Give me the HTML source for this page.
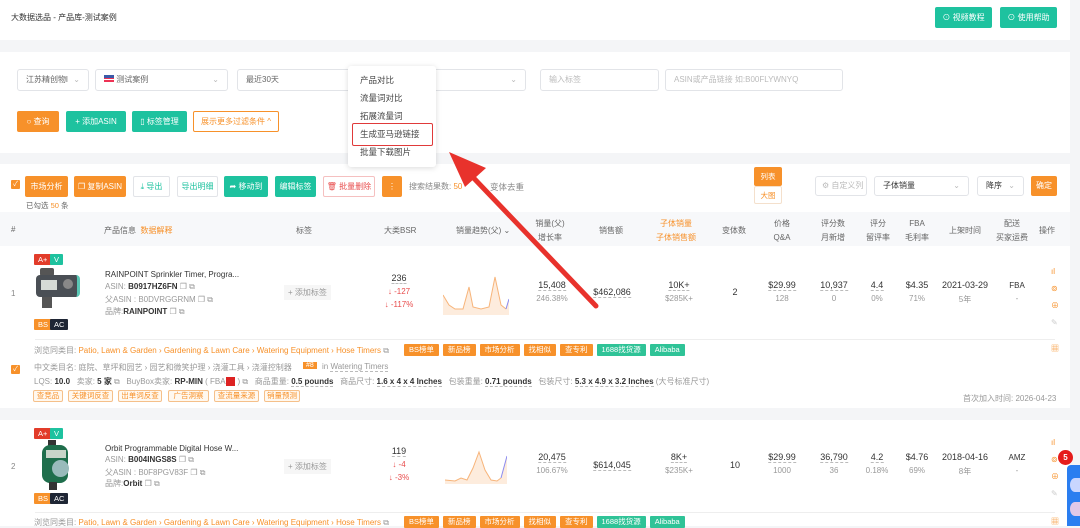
<!DOCTYPE html>
<html><head><meta charset="utf-8"><style>
*{box-sizing:border-box;margin:0;padding:0}
body{width:1080px;height:526px;overflow:hidden;background:#f4f5f7;font-family:"Liberation Sans","Noto Sans CJK SC",sans-serif;font-size:8px;color:#333;position:relative}
.a{position:absolute;white-space:nowrap}
.card{position:absolute;background:#fff}
.btn{position:absolute;height:21px;line-height:21px;text-align:center;color:#fff;font-size:8px;border-radius:2px;white-space:nowrap}
.g{background:#1ec29f}.o{background:#f7912a}
.sel{position:absolute;height:22px;border:1px solid #e2e4e8;border-radius:3px;background:#fff;color:#666;line-height:20px;padding-left:8px;white-space:nowrap}
.sel .c{position:absolute;right:8px;top:0;color:#bbb}
.ph{color:#bbb}
.hd{color:#666;text-align:center;transform:translateX(-50%)}
.tag{position:absolute;height:11px;line-height:11px;font-size:7.5px;color:#fff;padding:0 4px;border-radius:1px}
.otag{position:absolute;height:12px;line-height:10px;font-size:7.5px;color:#f7912a;border:1px solid #f5c08a;background:#fff8ef;text-align:center;border-radius:2px}
.u{border-bottom:1px dashed #bbb}
.gr{color:#999}
.red{color:#e84c4c}
.ctr{text-align:center;transform:translateX(-50%)}
.tl{position:absolute;display:flex;gap:4px}
.tl span{background:#f7912a;color:#fff;height:12px;line-height:12px;font-size:7.5px;padding:0 5px;border-radius:1px}
.tl span.gg{background:#2fc397}
</style></head><body>

<!-- top bar -->
<div class="card" style="left:0;top:0;width:1070px;height:40px"></div>
<div class="a" style="left:11px;top:12px;font-size:8px;color:#333">大数据选品 - 产品库-测试案例</div>
<div class="btn g" style="left:935px;top:7px;width:57px">⊙ 视频教程</div>
<div class="btn g" style="left:1000px;top:7px;width:57px">⊙ 使用帮助</div>

<!-- filter card -->
<div class="card" style="left:0;top:52px;width:1070px;height:101px"></div>
<div class="sel" style="left:17px;top:69px;width:72px">江苏精创物l <span class="c">⌄</span></div>
<div class="sel" style="left:95px;top:69px;width:133px"><span style="display:inline-block;width:10px;height:7px;background:linear-gradient(#3c5aa8 0 45%,#e35 45% 60%,#fff 60% 75%,#e35 75%)"></span> 测试案例 <span class="c">⌄</span></div>
<div class="sel" style="left:237px;top:69px;width:200px">最近30天</div>
<div class="sel" style="left:420px;top:69px;width:106px"><span class="c">⌄</span></div>
<div class="sel ph" style="left:540px;top:69px;width:119px">输入标签</div>
<div class="sel ph" style="left:665px;top:69px;width:178px">ASIN或产品链接 如:B00FLYWNYQ</div>
<div class="btn o" style="left:17px;top:111px;width:42px">○ 查询</div>
<div class="btn g" style="left:66px;top:111px;width:60px">+ 添加ASIN</div>
<div class="btn g" style="left:132px;top:111px;width:55px">▯ 标签管理</div>
<div class="btn" style="left:193px;top:111px;width:86px;border:1px solid #f7912a;color:#f7912a;background:#fff;line-height:19px">展示更多过滤条件 ^</div>

<!-- table card -->
<div class="card" style="left:0;top:164px;width:1070px;height:244px"></div>
<div class="a" style="left:11px;top:180px;width:9px;height:9px;background:#f7912a;border-radius:1px;color:#fff;font-size:7px;line-height:9px;text-align:center">✓</div>
<div class="btn o" style="left:25px;top:176px;width:43px">市场分析</div>
<div class="btn o" style="left:74px;top:176px;width:52px">❐ 复制ASIN</div>
<div class="btn" style="left:133px;top:176px;width:37px;border:1px solid #e2e4e8;color:#1ec29f;background:#fff;line-height:19px">⤓ 导出</div>
<div class="btn" style="left:177px;top:176px;width:41px;border:1px solid #e2e4e8;color:#1ec29f;background:#fff;line-height:19px">导出明细</div>
<div class="btn g" style="left:224px;top:176px;width:44px">➦ 移动到</div>
<div class="btn g" style="left:275px;top:176px;width:41px">编辑标签</div>
<div class="btn" style="left:323px;top:176px;width:52px;border:1px solid #f5c0c0;color:#e84c4c;background:#fff;line-height:19px">🗑 批量删除</div>
<div class="btn o" style="left:382px;top:176px;width:20px">⋮</div>
<div class="a" style="left:409px;top:181px;color:#888">搜索结果数: <span style="color:#f7912a">50</span></div>
<div class="a" style="left:490px;top:181px;color:#888;font-size:8.5px">变体去重</div>
<div class="a" style="left:26px;top:200px;color:#666;font-size:7.5px">已勾选 <span style="color:#f7912a">50</span> 条</div>
<div class="btn o" style="left:754px;top:167px;width:28px;height:19px;line-height:19px;font-size:7.5px">列表</div>
<div class="btn" style="left:754px;top:186px;width:28px;height:18px;line-height:18px;font-size:7.5px;background:#fff;color:#f7912a;border:1px solid #f4e0cc">大图</div>
<div class="sel ph" style="left:815px;top:176px;width:52px;height:20px;line-height:18px;padding-left:6px">⚙ 自定义列</div>
<div class="sel" style="left:874px;top:176px;width:95px;height:20px;line-height:18px;color:#333">子体销量<span class="c">⌄</span></div>
<div class="sel" style="left:977px;top:176px;width:47px;height:20px;line-height:18px;color:#333">降序<span class="c">⌄</span></div>
<div class="btn o" style="left:1031px;top:176px;width:26px;height:20px;line-height:20px">确定</div>

<!-- header -->
<div class="a" style="left:0;top:212px;width:1070px;height:34px;background:#f7f8fa"></div>
<div class="a" style="left:11px;top:225px;color:#666">#</div>
<div class="a" style="left:104px;top:225px;color:#666">产品信息 &nbsp;<span style="color:#f7912a">数据解释</span></div>
<div class="a" style="left:296px;top:225px;color:#666">标签</div>
<div class="a" style="left:384px;top:225px;color:#666">大类BSR</div>
<div class="a" style="left:456px;top:225px;color:#666">销量趋势(父) ⌄</div>
<div class="a hd" style="left:550px;top:217px;line-height:14px">销量(父)<br>增长率</div>
<div class="a hd" style="left:611px;top:225px">销售额</div>
<div class="a hd" style="left:676px;top:217px;line-height:14px;color:#f7912a">子体销量<br>子体销售额</div>
<div class="a hd" style="left:734px;top:225px">变体数</div>
<div class="a hd" style="left:782px;top:217px;line-height:14px">价格<br>Q&amp;A</div>
<div class="a hd" style="left:833px;top:217px;line-height:14px">评分数<br>月新增</div>
<div class="a hd" style="left:878px;top:217px;line-height:14px">评分<br>留评率</div>
<div class="a hd" style="left:917px;top:217px;line-height:14px">FBA<br>毛利率</div>
<div class="a hd" style="left:965px;top:225px">上架时间</div>
<div class="a hd" style="left:1012px;top:217px;line-height:14px">配送<br>买家运费</div>
<div class="a hd" style="left:1047px;top:225px">操作</div>

<!-- row 1 -->
<div class="a" style="left:11px;top:289px;color:#888">1</div>
<div class="tag" style="left:34px;top:254px;background:#e23c2a">A+</div>
<div class="tag" style="left:50px;top:254px;background:#1ec29f">V</div>
<div class="a" style="left:36px;top:268px;width:44px;height:40px">
 <div class="a" style="left:4px;top:0;width:14px;height:8px;background:#555;border-radius:2px"></div>
 <div class="a" style="left:0;top:7px;width:44px;height:22px;background:#4a4f55;border-radius:4px;border-right:3px solid #5ac7b5"></div>
 <div class="a" style="left:5px;top:12px;width:16px;height:10px;background:#d5dad5"></div>
 <div class="a" style="left:27px;top:11px;width:10px;height:10px;background:#888;border-radius:50%"></div>
 <div class="a" style="left:6px;top:29px;width:10px;height:11px;background:#555"></div>
</div>
<div class="tag" style="left:34px;top:319px;background:#f7912a">BS</div>
<div class="tag" style="left:50px;top:319px;background:#1f2635">AC</div>
<div class="a" style="left:105px;top:270px;color:#333">RAINPOINT Sprinkler Timer, Progra...</div>
<div class="a gr" style="left:105px;top:282px">ASIN: <b style="color:#333">B0917HZ6FN</b> ❐ ⧉</div>
<div class="a gr" style="left:105px;top:294px">父ASIN : B0DVRGGRNM ❐ ⧉</div>
<div class="a gr" style="left:105px;top:306px">品牌:<b style="color:#333">RAINPOINT</b> ❐ ⧉</div>
<div class="a gr" style="left:284px;top:285px;background:#f6f6f6;padding:2px 4px">+ 添加标签</div>
<div class="a ctr u" style="left:399px;top:273px;font-size:9px">236</div>
<div class="a ctr red" style="left:399px;top:287px">↓ -127</div>
<div class="a ctr red" style="left:399px;top:300px">↓ -117%</div>
<svg class="a" style="left:443px;top:275px" width="66" height="40"><path d="M0 20 L6 30 L12 34 L20 34 L26 12 L30 32 L38 34 L46 32 L52 2 L58 30 L63 34 L66 24 L66 40 L0 40Z" fill="#fde7d4" opacity=".8"/><path d="M0 20 L6 30 L12 34 L20 34 L26 12 L30 32 L38 34 L46 32 L52 2 L58 30 L63 34" fill="none" stroke="#f7b47a" stroke-width="1"/><path d="M63 34 L66 24" stroke="#8a8af0"/></svg>
<div class="a ctr u" style="left:552px;top:280px;font-size:9px">15,408</div>
<div class="a ctr gr" style="left:552px;top:294px">246.38%</div>
<div class="a ctr u" style="left:612px;top:287px;font-size:9px">$462,086</div>
<div class="a ctr u" style="left:679px;top:280px;font-size:9px">10K+</div>
<div class="a ctr gr" style="left:679px;top:294px">$285K+</div>
<div class="a ctr" style="left:735px;top:287px;font-size:9px">2</div>
<div class="a ctr u" style="left:782px;top:280px;font-size:9px">$29.99</div>
<div class="a ctr gr" style="left:782px;top:294px">128</div>
<div class="a ctr u" style="left:834px;top:280px;font-size:9px">10,937</div>
<div class="a ctr gr" style="left:834px;top:294px">0</div>
<div class="a ctr u" style="left:877px;top:280px;font-size:9px">4.4</div>
<div class="a ctr gr" style="left:877px;top:294px">0%</div>
<div class="a ctr" style="left:917px;top:280px;font-size:9px">$4.35</div>
<div class="a ctr gr" style="left:917px;top:294px">71%</div>
<div class="a ctr" style="left:965px;top:280px;font-size:9px">2021-03-29</div>
<div class="a ctr gr" style="left:965px;top:294px">5年</div>
<div class="a ctr" style="left:1017px;top:281px">FBA</div>
<div class="a ctr gr" style="left:1017px;top:294px">-</div>
<div class="a" style="left:1051px;top:263px;color:#f7912a;font-size:8px;line-height:17px">ıl<br>⊚<br>⊕<br><span style="color:#ccc">✎</span></div>
<div class="a" style="left:35px;top:339px;width:1020px;height:1px;background:#eee"></div>
<div class="a gr" style="left:34px;top:345px">浏览同类目: <span style="color:#f7912a">Patio, Lawn &amp; Garden › Gardening &amp; Lawn Care › Watering Equipment › Hose Timers</span> ⧉</div>
<div class="tl" style="left:404px;top:344px"><span>BS榜单</span><span>新品榜</span><span>市场分析</span><span>找相似</span><span>查专利</span><span class="gg">1688找货源</span><span class="gg">Alibaba</span></div>
<div class="a" style="left:1051px;top:343px;color:#f7912a">▦</div>
<div class="a" style="left:11px;top:365px;width:9px;height:9px;background:#f7912a;border-radius:1px;color:#fff;font-size:7px;line-height:9px;text-align:center">✓</div>
<div class="a gr" style="left:34px;top:362px">中文类目名: 庭院、草坪和园艺 › 园艺和微笑护理 › 浇灌工具 › 浇灌控制器</div>
<div class="a" style="left:303px;top:362px;background:#f7912a;color:#fff;padding:0 3px;font-size:7px">#8</div>
<div class="a gr" style="left:322px;top:362px">in <span class="u">Watering Timers</span></div>
<div class="a gr" style="left:34px;top:376px">LQS: <b style="color:#333">10.0</b> &nbsp; 卖家: <b style="color:#333">5 家</b> ⧉ &nbsp; BuyBox卖家: <b style="color:#333">RP-MIN</b> ( FBA<span style="background:#d22;color:#d22">■■</span> ) ⧉ &nbsp; 商品重量: <b class="u" style="color:#333">0.5 pounds</b> &nbsp; 商品尺寸: <b class="u" style="color:#333">1.6 x 4 x 4 Inches</b> &nbsp; 包装重量: <b class="u" style="color:#333">0.71 pounds</b> &nbsp; 包装尺寸: <b class="u" style="color:#333">5.3 x 4.9 x 3.2 Inches</b> (大号标准尺寸)</div>
<div class="otag" style="left:33px;top:390px;width:30px">查竞品</div>
<div class="otag" style="left:68px;top:390px;width:45px">关键词反查</div>
<div class="otag" style="left:118px;top:390px;width:44px">出单词反查</div>
<div class="otag" style="left:168px;top:390px;width:41px">广告洞察</div>
<div class="otag" style="left:214px;top:390px;width:45px">查流量来源</div>
<div class="otag" style="left:264px;top:390px;width:36px">销量预测</div>
<div class="a gr" style="left:963px;top:393px">首次加入时间: 2026-04-23</div>

<!-- row 2 -->
<div class="card" style="left:0;top:420px;width:1070px;height:106px"></div>
<div class="a" style="left:11px;top:462px;color:#888">2</div>
<div class="tag" style="left:34px;top:428px;background:#e23c2a">A+</div>
<div class="tag" style="left:50px;top:428px;background:#1ec29f">V</div>
<div class="a" style="left:40px;top:440px;width:32px;height:50px">
 <div class="a" style="left:8px;top:0;width:8px;height:6px;background:#333"></div>
 <div class="a" style="left:2px;top:5px;width:26px;height:38px;background:#1f6e4c;border-radius:8px"></div>
 <div class="a" style="left:6px;top:10px;width:20px;height:8px;background:#c8d4c8"></div>
 <div class="a" style="left:12px;top:20px;width:17px;height:17px;background:#9bb;border-radius:50%"></div>
 <div class="a" style="left:9px;top:42px;width:8px;height:8px;background:#333"></div>
</div>
<div class="tag" style="left:34px;top:493px;background:#f7912a">BS</div>
<div class="tag" style="left:50px;top:493px;background:#1f2635">AC</div>
<div class="a" style="left:105px;top:444px">Orbit Programmable Digital Hose W...</div>
<div class="a gr" style="left:105px;top:455px">ASIN: <b style="color:#333">B004INGS8S</b> ❐ ⧉</div>
<div class="a gr" style="left:105px;top:467px">父ASIN : B0F8PGV83F ❐ ⧉</div>
<div class="a gr" style="left:105px;top:478px">品牌:<b style="color:#333">Orbit</b> ❐ ⧉</div>
<div class="a gr" style="left:284px;top:459px;background:#f6f6f6;padding:2px 4px">+ 添加标签</div>
<div class="a ctr u" style="left:399px;top:446px;font-size:9px">119</div>
<div class="a ctr red" style="left:399px;top:460px">↓ -4</div>
<div class="a ctr red" style="left:399px;top:473px">↓ -3%</div>
<svg class="a" style="left:445px;top:450px" width="62" height="34"><path d="M0 30 L10 31 L16 28 L22 30 L28 18 L34 2 L40 20 L46 30 L52 31 L56 28 L62 6 L62 34 L0 34Z" fill="#fde7d4" opacity=".8"/><path d="M0 30 L10 31 L16 28 L22 30 L28 18 L34 2 L40 20 L46 30 L52 31 L56 28" fill="none" stroke="#f7b47a"/><path d="M56 28 L62 6" stroke="#8a8af0"/></svg>
<div class="a ctr u" style="left:552px;top:452px;font-size:9px">20,475</div>
<div class="a ctr gr" style="left:552px;top:466px">106.67%</div>
<div class="a ctr u" style="left:612px;top:460px;font-size:9px">$614,045</div>
<div class="a ctr u" style="left:679px;top:452px;font-size:9px">8K+</div>
<div class="a ctr gr" style="left:679px;top:466px">$235K+</div>
<div class="a ctr" style="left:735px;top:460px;font-size:9px">10</div>
<div class="a ctr u" style="left:782px;top:452px;font-size:9px">$29.99</div>
<div class="a ctr gr" style="left:782px;top:466px">1000</div>
<div class="a ctr u" style="left:834px;top:452px;font-size:9px">36,790</div>
<div class="a ctr gr" style="left:834px;top:466px">36</div>
<div class="a ctr u" style="left:877px;top:452px;font-size:9px">4.2</div>
<div class="a ctr gr" style="left:877px;top:466px">0.18%</div>
<div class="a ctr" style="left:917px;top:452px;font-size:9px">$4.76</div>
<div class="a ctr gr" style="left:917px;top:466px">69%</div>
<div class="a ctr" style="left:965px;top:452px;font-size:9px">2018-04-16</div>
<div class="a ctr gr" style="left:965px;top:466px">8年</div>
<div class="a ctr" style="left:1017px;top:453px">AMZ</div>
<div class="a ctr gr" style="left:1017px;top:466px">-</div>
<div class="a" style="left:1051px;top:434px;color:#f7912a;font-size:8px;line-height:17px">ıl<br>⊚<br>⊕<br><span style="color:#ccc">✎</span></div>
<div class="a" style="left:35px;top:512px;width:1020px;height:1px;background:#eee"></div>
<div class="a gr" style="left:34px;top:517px">浏览同类目: <span style="color:#f7912a">Patio, Lawn &amp; Garden › Gardening &amp; Lawn Care › Watering Equipment › Hose Timers</span> ⧉</div>
<div class="tl" style="left:404px;top:516px"><span>BS榜单</span><span>新品榜</span><span>市场分析</span><span>找相似</span><span>查专利</span><span class="gg">1688找货源</span><span class="gg">Alibaba</span></div>
<div class="a" style="left:1051px;top:516px;color:#f7912a">▦</div>

<!-- chat widget -->
<div class="a" style="left:1067px;top:465px;width:14px;height:61px;background:#2a7ef0;border-radius:4px 0 0 0"></div>
<div class="a" style="left:1070px;top:478px;width:10px;height:14px;background:#c9d6ff;border-radius:50% 0 0 50%"></div>
<div class="a" style="left:1070px;top:502px;width:10px;height:14px;background:#e0c8e8;border-radius:50% 0 0 50%"></div>
<div class="a" style="left:1058px;top:450px;width:15px;height:15px;border-radius:50%;background:#e51c1c;color:#fff;font-size:8px;line-height:15px;text-align:center;font-weight:bold">5</div>

<!-- dropdown menu -->
<div class="a" style="left:348px;top:66px;width:88px;height:101px;background:#fff;border-radius:3px;box-shadow:0 1px 6px rgba(0,0,0,.15)"></div>
<div class="a" style="left:360px;top:71px;line-height:18px;color:#444;font-size:8.5px">产品对比<br>流量词对比<br>拓展流量词<br>生成亚马逊链接<br>批量下载图片</div>
<div class="a" style="left:352px;top:123px;width:81px;height:23px;border:1.5px solid #e03a3a;border-radius:2px"></div>

<!-- arrow -->
<svg class="a" style="left:0;top:0" width="1080" height="526"><line x1="596" y1="306" x2="466" y2="170" stroke="#e8322c" stroke-width="5" stroke-linecap="round"/><polygon points="449,152 486,168 465,187" fill="#e8322c"/></svg>
</body></html>
